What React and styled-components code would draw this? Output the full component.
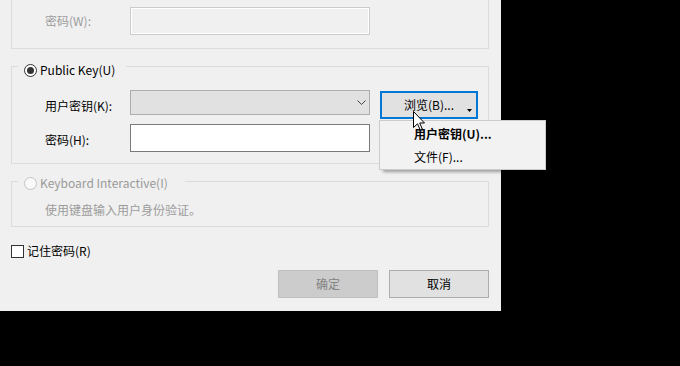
import React from 'react';
import styled, { createGlobalStyle } from 'styled-components';

const Global = createGlobalStyle`
  html, body { margin: 0; padding: 0; background: #000; }
  body {
    font-family: "Noto Sans CJK SC", "Noto Sans", sans-serif;
    font-size: 12px;
    line-height: 16px;
    color: #000;
  }
  #root { width: 680px; height: 366px; overflow: hidden; }
`;

const Screen = styled.div`
  position: relative;
  width: 680px;
  height: 366px;
  background: #000;
  overflow: hidden;
`;

const Dialog = styled.div`
  width: 501px;
  height: 311px;
  box-sizing: border-box;
  background: #f0f0f0;
  padding: 0 12px 0 11px;
  display: flex;
  flex-direction: column;
`;

const Group = styled.fieldset`
  margin: ${p => p.$mt || 0}px 0 0;
  padding: 0;
  min-inline-size: 0;
  border: 1px solid #dcdcdc;
  ${p => (p.$open ? 'border-top: none;' : '')}
`;

const Legend = styled.legend`
  margin-left: 6px;
  padding: ${p => p.$ptop}px ${p => p.$pr}px ${p => p.$pbot || 0}px 6px;
  height: 24px;
  box-sizing: border-box;
  display: flex;
  align-items: center;
  gap: 3px;
  color: ${p => (p.$disabled ? '#9a9a9a' : '#000')};
  white-space: nowrap;
`;

const Radio = styled.span`
  width: 13px;
  height: 13px;
  box-sizing: border-box;
  border-radius: 50%;
  border: 1px solid ${p => (p.$disabled ? '#c4c4c4' : '#333')};
  background: ${p => (p.$disabled ? '#f9f9f9' : '#fff')};
  display: flex;
  align-items: center;
  justify-content: center;
  flex: none;
  &::after {
    content: '';
    display: ${p => (p.$checked ? 'block' : 'none')};
    width: 7px;
    height: 7px;
    border-radius: 50%;
    background: #333;
  }
`;

const GroupBody = styled.div`
  display: flex;
  flex-direction: column;
  gap: ${p => p.$gap || 0}px;
  padding: ${p => p.$pt}px 0 ${p => p.$pb}px 33px;
`;

const FormRow = styled.div`
  display: flex;
  align-items: flex-start;
`;

const Label = styled.label`
  width: 85px;
  flex: none;
  margin-top: ${p => p.$mt}px;
  color: ${p => (p.$disabled ? '#9c9c9c' : '#000')};
  white-space: nowrap;
`;

const TextBox = styled.input`
  width: 240px;
  height: 28px;
  box-sizing: border-box;
  margin: 0;
  padding: 0 4px;
  font: inherit;
  outline: none;
  border: 1px solid ${p => (p.disabled ? '#cccccc' : '#7a7a7a')};
  background: ${p => (p.disabled ? '#f0f0f0' : '#fff')};
  box-shadow: ${p => (p.disabled ? 'inset 0 0 0 1px #fff' : 'none')};
`;

const Combo = styled.div`
  width: 240px;
  height: 25px;
  box-sizing: border-box;
  border: 1px solid #adadad;
  background: #e1e1e1;
  display: flex;
  align-items: center;
  justify-content: flex-end;
  padding-right: 3px;
`;

const BrowseButton = styled.button`
  position: relative;
  width: 98px;
  height: 28px;
  margin: 1px 0 0 10px;
  box-sizing: border-box;
  border: 2px solid #0078d7;
  background: #e1e1e1;
  font: inherit;
  color: #000;
  padding: 0;
  display: flex;
  align-items: center;
  justify-content: center;
`;

const SplitArrow = styled.svg`
  position: absolute;
  right: 4px;
  top: 16px;
`;

const Description = styled.div`
  color: #9c9c9c;
  white-space: nowrap;
`;

const CheckRow = styled.label`
  margin-top: 16px;
  height: 16px;
  display: flex;
  align-items: center;
  gap: 3px;
`;

const CheckBox = styled.span`
  width: 13px;
  height: 13px;
  box-sizing: border-box;
  border: 1px solid #333;
  background: #fff;
  flex: none;
`;

const ButtonRow = styled.div`
  margin-top: 11px;
  display: flex;
  justify-content: flex-end;
  gap: 11px;
`;

const DialogButton = styled.button`
  width: 100px;
  height: 28px;
  box-sizing: border-box;
  margin: 0;
  padding: 0;
  font: inherit;
  border: 1px solid ${p => (p.disabled ? '#bfbfbf' : '#adadad')};
  background: ${p => (p.disabled ? '#cccccc' : '#e1e1e1')};
  color: ${p => (p.disabled ? '#838383' : '#000')};
`;

const Menu = styled.div`
  position: absolute;
  left: 379px;
  top: 120px;
  width: 167px;
  box-sizing: border-box;
  padding: 1px 0;
  border: 1px solid #cccccc;
  background: #f2f2f2;
  box-shadow: 3px 3px 3px -1px rgba(0, 0, 0, 0.35);
`;

const MenuItem = styled.div`
  height: 23px;
  display: flex;
  align-items: center;
  padding-left: 34px;
  font-weight: ${p => (p.$bold ? 700 : 400)};
  white-space: nowrap;
`;

const Cursor = styled.svg`
  position: absolute;
  left: 413px;
  top: 111px;
`;

export default function App() {
  return (
    <Screen>
      <Global />
      <Dialog>
        <Group $open>
          <GroupBody $pt={7} $pb={13}>
            <FormRow>
              <Label $mt={6} $disabled>密码(W):</Label>
              <TextBox type="password" disabled />
            </FormRow>
          </GroupBody>
        </Group>

        <Group $mt={5}>
          <Legend $ptop={8} $pr={11}>
            <Radio $checked />
            <span>Public Key(U)</span>
          </Legend>
          <GroupBody $pt={12} $pb={11} $gap={5}>
            <FormRow>
              <Label $mt={8}>用户密钥(K):</Label>
              <Combo>
                <svg width="9" height="5" viewBox="0 0 9 5">
                  <path d="M0.5 0.5 L4.5 4.5 L8.5 0.5" fill="none" stroke="#444" strokeWidth="1" />
                </svg>
              </Combo>
              <BrowseButton>
                浏览(B)...
                <SplitArrow width="5" height="3" viewBox="0 0 5 3">
                  <polygon points="0,0 5,0 2.5,3" fill="#000" />
                </SplitArrow>
              </BrowseButton>
            </FormRow>
            <FormRow>
              <Label $mt={8}>密码(H):</Label>
              <TextBox type="password" />
            </FormRow>
          </GroupBody>
        </Group>

        <Group $mt={5}>
          <Legend $ptop={6} $pbot={2} $pr={17} $disabled>
            <Radio $disabled />
            <span>Keyboard Interactive(I)</span>
          </Legend>
          <GroupBody $pt={9} $pb={8}>
            <Description>使用键盘输入用户身份验证。</Description>
          </GroupBody>
        </Group>

        <CheckRow>
          <CheckBox />
          <span>记住密码(R)</span>
        </CheckRow>

        <ButtonRow>
          <DialogButton disabled>确定</DialogButton>
          <DialogButton>取消</DialogButton>
        </ButtonRow>
      </Dialog>

      <Menu>
        <MenuItem $bold>用户密钥(U)...</MenuItem>
        <MenuItem>文件(F)...</MenuItem>
      </Menu>

      <Cursor width="13" height="20" viewBox="0 0 13 20">
        <path
          d="M0.5 0.5 V16.5 L4.5 12.8 L7.2 18.8 L9.3 17.9 L6.7 12 H11.5 Z"
          fill="#fff"
          stroke="#000"
          strokeWidth="1"
          strokeLinejoin="miter"
        />
      </Cursor>
    </Screen>
  );
}
